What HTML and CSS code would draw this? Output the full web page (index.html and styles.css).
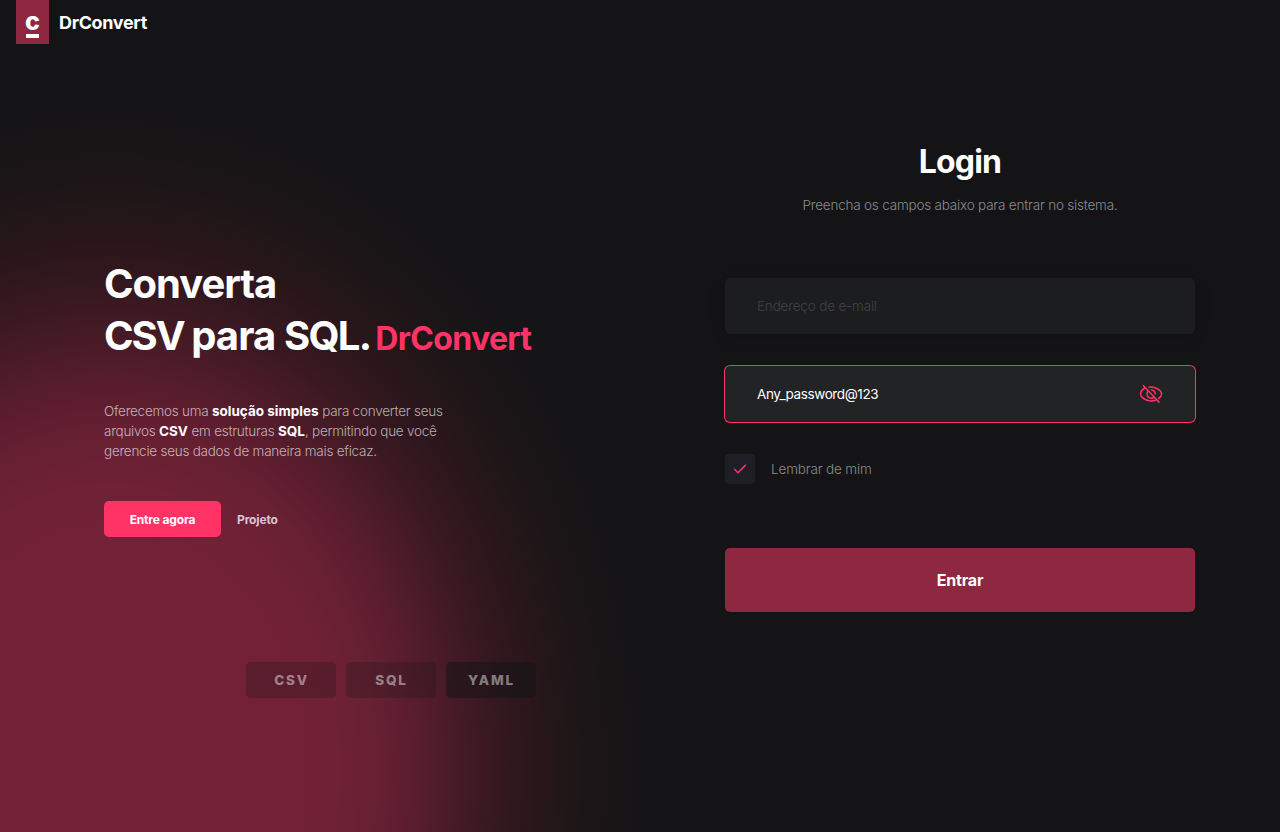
FILE: index.html
```html
<!DOCTYPE html>
<html lang="pt-BR">
<head>
<meta charset="utf-8">
<title>DrConvert</title>
<link rel="stylesheet" href="styles.css">
</head>
<body>
<div class="page">
  <header class="topbar">
    <div class="logo"><span class="logo-letter">c</span><span class="logo-line"></span></div>
    <span class="brand">DrConvert</span>
  </header>
  <main class="columns">
    <section class="hero">
      <h1 class="headline"><span class="line one">Converta</span><span class="line"><span class="two"><span class="csv">CSV </span>para <span class="sql">SQL.</span></span><span class="accent">DrConvert</span></span></h1>
      <p class="lead"><span class="row">Oferecemos uma <b>solução simples</b> para converter seus</span><span class="row">arquivos <b>CSV</b> em estruturas <b>SQL</b>, permitindo que você</span><span class="row">gerencie seus dados de maneira mais eficaz.</span></p>
      <div class="actions"><a class="start"><span>Entre agora</span></a><a class="project">Projeto</a></div>
      <div class="formats"><span class="chip">CSV</span><span class="chip">SQL</span><span class="chip dark">YAML</span></div>
    </section>
    <section class="login">
      <h2 class="title"><span>Login</span></h2>
      <p class="subtitle"><span>Preencha os campos abaixo para entrar no sistema.</span></p>
      <div class="field"><span class="placeholder">Endereço de e-mail</span></div>
      <div class="field active"><span class="value">Any_password@123</span>
        <svg class="eye" viewBox="0 0 24 24" fill="none" stroke="currentColor" stroke-width="1.5" stroke-linecap="round" stroke-linejoin="round"><path d="M6.500 5.800C3.300 7.300 1.600 10.200 1.600 12C1.600 14.500 5.600 19 12 19C14 19 15.800 18.600 17.300 17.900M10 5.100C17.500 4.300 22.600 9.200 22.600 12C22.600 13.300 21.500 15.100 19.500 16.600M8.800 9.300C6.700 12.200 8.600 16.200 12 16.200C13.200 16.200 14.200 15.800 14.900 15.100M12.400 7.900C14.500 8.100 16.200 9.800 16.200 12M4.300 3.500L20 20.300"/></svg>
      </div>
      <label class="remember"><span class="check"><svg viewBox="0 0 14 10" fill="none" stroke="currentColor" stroke-width="1.5" stroke-linecap="round" stroke-linejoin="round"><path d="M1.500 5.200L5 8.700L12.300 1.400"/></svg></span><span class="remember-text">Lembrar de mim</span></label>
      <div class="submit"><span>Entrar</span></div>
    </section>
  </main>
</div>
</body>
</html>
```
FILE: styles.css
```css
* { box-sizing: border-box; margin: 0; padding: 0; }
body { background: #141416; color: #fff; font-family: Inter, "Open Sans", sans-serif; }
.page {
  width: 1280px; height: 832px; overflow: hidden; display: flex; flex-direction: column;
  background: radial-gradient(ellipse 555px 690px at 110px 770px, #722136 0%, #722136 34%, #6f2135 41%, #682033 48%, #5a1d2e 55%, #4b1b28 61%, #3c1922 67%, #31171e 72%, #27161a 78%, #1e1618 84%, #181517 91%, #141416 100%) 0 0 / 640px 832px no-repeat, #141416;
}
.topbar { height: 44px; padding-left: 16px; display: flex; align-items: center; gap: 10px; }
.logo { width: 33px; height: 44px; background: #8e2740; display: flex; flex-direction: column; align-items: center; padding-top: 8px; }
.logo-letter { font-size: 25px; line-height: 26px; font-weight: 800; }
.logo-line { width: 13px; height: 4px; background: #fff; }
.brand { font-size: 18px; font-weight: 700; letter-spacing: -0.35px; line-height: 26px; padding-top: 2px; }
.columns { display: grid; grid-template-columns: 640px 640px; flex: 1; }
.hero { padding: 214px 104px 0; }
.headline { font-size: 40px; line-height: 52px; font-weight: 700; white-space: nowrap; }
.line { display: flex; align-items: baseline; }
.one { letter-spacing: -1.05px; }
.two { letter-spacing: -0.9px; }
.csv { letter-spacing: -2px; }
.sql { letter-spacing: -1.7px; }
.accent { font-size: 32px; color: #ff3366; margin-left: 5px; letter-spacing: -0.65px; }
.lead { margin-top: 36px; font-size: 13.5px; line-height: 20px; font-weight: 300; color: rgba(255,255,255,.65); white-space: nowrap; }
.lead b { font-weight: 700; color: #fff; letter-spacing: 0; }
.row { display: block; letter-spacing: -0.25px; }
.actions { margin-top: 40px; display: flex; align-items: center; gap: 16px; font-size: 12px; font-weight: 700; }
.start { width: 117px; height: 36px; border-radius: 5px; background: #ff3366; display: flex; align-items: center; justify-content: center; letter-spacing: -0.15px; }
.project { color: rgba(255,255,255,.75); letter-spacing: -0.15px; }
.formats { margin: 125px 0 0 142px; display: flex; gap: 10px; }
.chip { width: 90px; height: 36px; flex: none; border-radius: 5px; background: rgba(20,20,22,.25); display: flex; align-items: center; justify-content: center; font-size: 13.5px; font-weight: 800; letter-spacing: 1.8px; padding-left: 1px; color: rgba(255,255,255,.45); }
.chip.dark { background: rgba(20,20,22,.55); }
.login { padding: 97px 85px 0; }
.title { font-size: 32px; line-height: 42px; font-weight: 700; letter-spacing: -0.85px; text-align: center; }
.subtitle { margin-top: 12px; font-size: 13.5px; line-height: 20px; font-weight: 300; letter-spacing: -0.2px; text-align: center; color: #8b8b8c; }
.field { margin-top: 63px; height: 56px; border-radius: 5px; background: #1c1d1f; padding: 0 32px; display: flex; align-items: center; justify-content: space-between; font-size: 13.5px; line-height: 18px; box-shadow: 0 0 16px rgba(10,10,12,.2); }
.placeholder { color: #424247; font-weight: 300; letter-spacing: -0.17px; padding-bottom: 1px; }
.field.active { margin-top: 32px; background: #222325; box-shadow: 0 0 0 1px #ff3366; }
.value { letter-spacing: -0.4px; padding-bottom: 1px; }
.eye { width: 24px; height: 24px; color: #ff3366; }
.remember { margin-top: 32px; display: flex; align-items: center; gap: 16px; font-size: 13.5px; line-height: 18px; font-weight: 300; letter-spacing: -0.15px; color: #8b8b8c; }
.remember-text { padding-bottom: 1px; }
.check { width: 30px; height: 30px; border-radius: 4px; background: #1e1e25; color: #ff3366; display: flex; align-items: center; justify-content: center; }
.check svg { width: 14px; height: 10px; }
.submit { margin-top: 64px; height: 64px; border-radius: 5px; background: #8e2740; display: flex; align-items: center; justify-content: center; font-size: 16px; font-weight: 700; letter-spacing: -0.2px; }
```
